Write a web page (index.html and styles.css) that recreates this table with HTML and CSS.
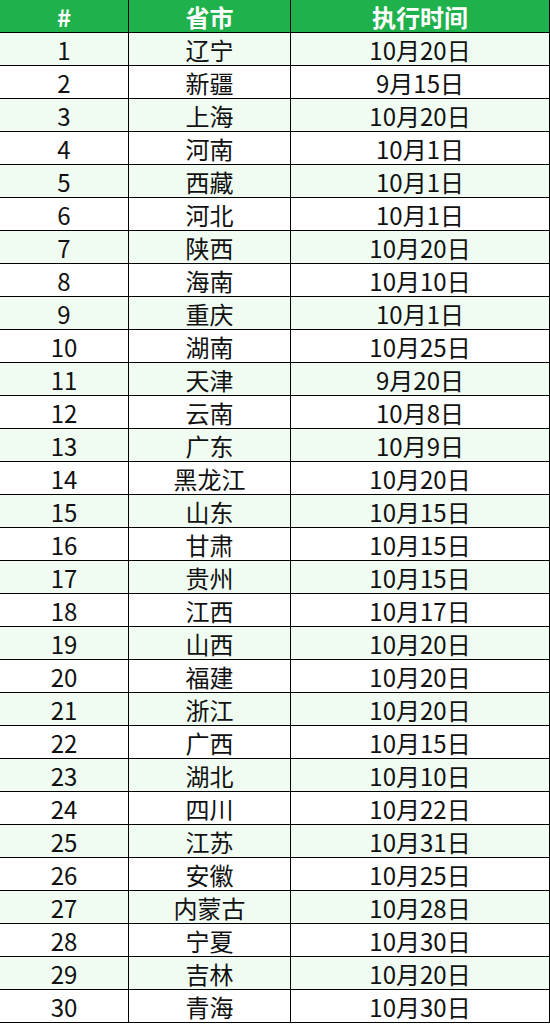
FILE: index.html
```html
<!DOCTYPE html>
<html lang="zh-CN">
<head>
<meta charset="utf-8">
<link rel="stylesheet" href="styles.css">
</head>
<body>
<table class="sheet">
<thead>
<tr><th class="c1">#</th><th class="c2">省市</th><th class="c3">执行时间</th></tr>
</thead>
<tbody>
<tr><td>1</td><td>辽宁</td><td>10月20日</td></tr>
<tr><td>2</td><td>新疆</td><td>9月15日</td></tr>
<tr><td>3</td><td>上海</td><td>10月20日</td></tr>
<tr><td>4</td><td>河南</td><td>10月1日</td></tr>
<tr><td>5</td><td>西藏</td><td>10月1日</td></tr>
<tr><td>6</td><td>河北</td><td>10月1日</td></tr>
<tr><td>7</td><td>陕西</td><td>10月20日</td></tr>
<tr><td>8</td><td>海南</td><td>10月10日</td></tr>
<tr><td>9</td><td>重庆</td><td>10月1日</td></tr>
<tr><td>10</td><td>湖南</td><td>10月25日</td></tr>
<tr><td>11</td><td>天津</td><td>9月20日</td></tr>
<tr><td>12</td><td>云南</td><td>10月8日</td></tr>
<tr><td>13</td><td>广东</td><td>10月9日</td></tr>
<tr><td>14</td><td>黑龙江</td><td>10月20日</td></tr>
<tr><td>15</td><td>山东</td><td>10月15日</td></tr>
<tr><td>16</td><td>甘肃</td><td>10月15日</td></tr>
<tr><td>17</td><td>贵州</td><td>10月15日</td></tr>
<tr><td>18</td><td>江西</td><td>10月17日</td></tr>
<tr><td>19</td><td>山西</td><td>10月20日</td></tr>
<tr><td>20</td><td>福建</td><td>10月20日</td></tr>
<tr><td>21</td><td>浙江</td><td>10月20日</td></tr>
<tr><td>22</td><td>广西</td><td>10月15日</td></tr>
<tr><td>23</td><td>湖北</td><td>10月10日</td></tr>
<tr><td>24</td><td>四川</td><td>10月22日</td></tr>
<tr><td>25</td><td>江苏</td><td>10月31日</td></tr>
<tr><td>26</td><td>安徽</td><td>10月25日</td></tr>
<tr><td>27</td><td>内蒙古</td><td>10月28日</td></tr>
<tr><td>28</td><td>宁夏</td><td>10月30日</td></tr>
<tr><td>29</td><td>吉林</td><td>10月20日</td></tr>
<tr><td>30</td><td>青海</td><td>10月30日</td></tr>
</tbody>
</table>
</body>
</html>
```
FILE: styles.css
```css
html, body {
  margin: 0;
  padding: 0;
  background: #ffffff;
}
.sheet {
  border-collapse: collapse;
  table-layout: fixed;
  width: 550px;
  font-family: "Noto Sans CJK SC", "Noto Sans", sans-serif;
  font-size: 24px;
  color: #111;
}
.sheet th, .sheet td {
  padding: 2px 0 0 0;
  text-align: center;
  vertical-align: middle;
  line-height: 30px;
  height: 30px;
  border-right: 1px solid #000;
  border-bottom: 1px solid #000;
  overflow: hidden;
  white-space: nowrap;
}
.sheet .c1 { width: 128px; }
.sheet .c2 { width: 161px; }
.sheet .c3 { width: 258px; }
.sheet th {
  background: #1fb14b;
  color: #ffffff;
  font-weight: bold;
}
.sheet tbody tr:nth-child(odd) td {
  background: #f0fcf2;
}
```
